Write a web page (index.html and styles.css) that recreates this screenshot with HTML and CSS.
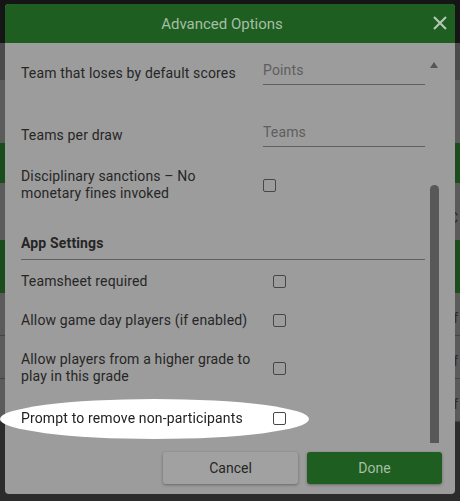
FILE: index.html
```html
<!DOCTYPE html>
<html lang="en">
    <head>
        <meta charset="UTF-8" />
        <meta name="viewport" content="width=device-width, initial-scale=1.0" />
        <title>Advanced Options</title>
        <link rel="stylesheet" href="styles.css">
    </head>
    <body>
        <!-- page behind the dialog, dimmed -->
        <div class="page">
            <div class="band band-top"></div>
            <div class="band band-dark"></div>
            <div class="band band-mid"></div>
            <div class="band band-green"></div>
            <div class="band band-mid band-text">C</div>
            <div class="band band-green band-green2"></div>
            <div class="band list-row">ff</div>
            <div class="band list-row">ff</div>
            <div class="band list-row">ff</div>
            <div class="band band-bottom"></div>
        </div>

        <div class="dialog">
            <div class="dialog-head">
                <h1>Advanced Options</h1>
                <span class="close">
                    <svg width="14" height="14" viewBox="0 0 14 14">
                        <path d="M1 1 L13 13 M13 1 L1 13" stroke="#b4c6b4" stroke-width="2.2" fill="none" />
                    </svg>
                </span>
            </div>

            <div class="dialog-body">
                <div class="scroll-content">
                    <div class="opt-row row-input first">
                        <div class="label">Team that loses by default scores</div>
                        <div class="field">Points</div>
                    </div>
                    <div class="opt-row row-input second">
                        <div class="label">Teams per draw</div>
                        <div class="field">Teams</div>
                    </div>
                    <div class="opt-row third">
                        <div class="label">Disciplinary sanctions – No monetary fines invoked</div>
                        <span class="checkbox"></span>
                    </div>

                    <h2 class="section-title">App Settings</h2>

                    <div class="app-row">
                        <div class="label">Teamsheet required</div>
                        <span class="checkbox"></span>
                    </div>
                    <div class="app-row">
                        <div class="label">Allow game day players (if enabled)</div>
                        <span class="checkbox"></span>
                    </div>
                    <div class="app-row">
                        <div class="label">Allow players from a higher grade to play in this grade</div>
                        <span class="checkbox"></span>
                    </div>
                    <div class="app-row spotlight">
                        <div class="label">Prompt to remove non-participants</div>
                        <span class="checkbox"></span>
                    </div>
                </div>
                <div class="scrollbar">
                    <span class="arrow"></span>
                    <span class="thumb"></span>
                </div>
            </div>

            <div class="dialog-foot">
                <button class="btn btn-cancel">Cancel</button>
                <button class="btn btn-done">Done</button>
            </div>
        </div>
    </body>
</html>
```

FILE: styles.css
```css
html, body {
    margin: 0;
    padding: 0;
}
body {
    font-family: Roboto, "Liberation Sans", Arial, sans-serif;
    width: 460px;
    height: 501px;
    overflow: hidden;
    background: #2c2c2c;
}
.page {
    display: flex;
    flex-direction: column;
}
.band {
    height: 37px;
    background: #5b5b5b;
    color: #2a2a2a;
    font-size: 14px;
    text-align: right;
    padding-right: 2px;
}
.band-top {
    height: 43px;
    background: #151515;
}
.band-dark {
    height: 37px;
    background: #4b4b4b;
}
.band-mid {
    height: 63px;
}
.band-green {
    height: 40px;
    background: #1a4c1c;
}
.band-text {
    height: 57px;
    line-height: 70px;
}
.band-green2 {
    height: 53px;
}
.list-row {
    height: 42px;
    line-height: 50px;
    border-bottom: 1px solid #444;
}
.band-bottom {
    height: 60px;
    background: #2c2c2c;
}

.dialog {
    position: fixed;
    left: 5px;
    top: 4px;
    width: 450px;
    height: 490px;
    background: #9c9c9c;
    border-radius: 4px;
    display: flex;
    flex-direction: column;
    color: #262626;
}
.dialog-head {
    height: 39px;
    background: #1e5e20;
    border-radius: 4px 4px 0 0;
    display: flex;
    align-items: center;
    justify-content: center;
    padding-right: 16px;
    position: relative;
}
.dialog-head h1 {
    margin: 0;
    font-size: 15px;
    font-weight: 400;
    color: #a6bea6;
}
.close {
    position: absolute;
    right: 8px;
    top: 12px;
    width: 14px;
    height: 14px;
}
.close svg {
    display: block;
}

.dialog-body {
    flex: 1;
    display: flex;
    gap: 3px;
    padding: 0 15px 0 16px;
    min-height: 0;
}
.scroll-content {
    flex: 1;
    font-size: 14px;
    line-height: 17px;
    letter-spacing: 0.15px;
}
.label {
    color: #262626;
}
.opt-row {
    display: grid;
    grid-template-columns: 226px 1fr;
    column-gap: 16px;
    align-items: center;
    height: 40px;
}
.opt-row.first {
    margin-top: 10px;
}
.opt-row.second {
    margin-top: 22px;
}
.opt-row.third {
    margin-top: 10px;
}
.field {
    color: #5e5e5e;
    padding: 0 0 5px;
    border-bottom: 1px solid #5f5f5f;
    line-height: 18px;
}
.checkbox {
    display: block;
    width: 11px;
    height: 11px;
    border: 1.5px solid #474747;
    border-radius: 2px;
}
.section-title {
    margin: 30px 0 0;
    font-size: 14px;
    font-weight: 700;
    line-height: 17px;
    padding-bottom: 7px;
    border-bottom: 1px solid #606060;
}
.app-row {
    display: grid;
    grid-template-columns: 236px 1fr;
    column-gap: 16px;
    align-items: center;
    padding: 11px 0;
    position: relative;
}
.section-title + .app-row {
    padding-top: 13px;
}
.app-row.spotlight {
    padding-top: 14px;
}
.spotlight::before {
    content: "";
    position: absolute;
    left: -21px;
    top: 3px;
    width: 309px;
    height: 40px;
    background: #fff;
    border-radius: 50%;
}
.spotlight .label,
.spotlight .checkbox {
    position: relative;
}
.spotlight .label {
    color: #222;
}

.scrollbar {
    width: 12px;
    display: flex;
    flex-direction: column;
    align-items: center;
    padding-top: 19px;
}
.arrow {
    width: 0;
    height: 0;
    border-left: 4.5px solid transparent;
    border-right: 4.5px solid transparent;
    border-bottom: 6px solid #565656;
}
.thumb {
    margin-top: 117px;
    width: 9px;
    flex: 1;
    margin-bottom: 2px;
    background: #585858;
    border-radius: 5px 5px 0 0;
}

.dialog-foot {
    display: flex;
    justify-content: flex-end;
    gap: 9px;
    padding: 7px 13px 10px;
}
.btn {
    width: 135px;
    height: 32px;
    border: none;
    border-radius: 3px;
    font-family: Roboto, "Liberation Sans", Arial, sans-serif;
    font-size: 14px;
    cursor: pointer;
}
.btn-cancel {
    background: #a1a1a1;
    color: #262626;
    box-shadow: 0 1px 3px rgba(0, 0, 0, 0.35);
}
.btn-done {
    background: #1e5e20;
    color: #a6bea6;
    box-shadow: 0 1px 3px rgba(0, 0, 0, 0.35);
}
```
